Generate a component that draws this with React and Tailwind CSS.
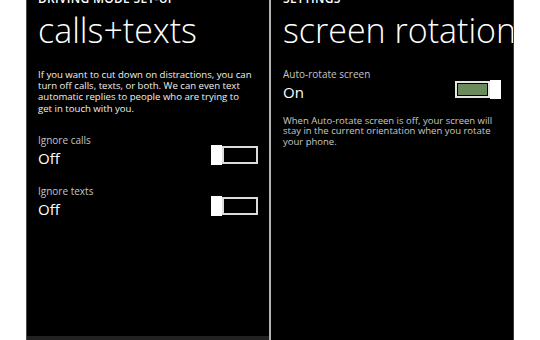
import React from "react";

const font = { fontFamily: '"Open Sans", "Noto Sans", sans-serif' };

function OffToggle() {
  return (
    <div className="flex items-start mt-[11px]">
      <div className="w-[11px] h-[20px] bg-white" />
      <div className="w-[36px] h-[18px] mt-[1px] border-2 border-[#dcdcdc] bg-black" />
    </div>
  );
}

function OnToggle() {
  return (
    <div className="flex items-start mt-[12px]">
      <div className="w-[35px] h-[17px] mt-[1px] border-2 border-[#e6e6e6] bg-black p-[1px]">
        <div className="w-full h-full bg-[#6b8b5c]" />
      </div>
      <div className="w-[11px] h-[19px] bg-white" />
    </div>
  );
}

export default function App() {
  return (
    <div className="w-[540px] h-[340px] bg-white flex pl-[26px] overflow-hidden" style={font}>
      {/* Left screen */}
      <div className="w-[243px] h-full bg-black border-l border-[#4a4a4a] flex flex-col overflow-hidden">
        <div className="flex-1 flex flex-col pl-[11px] pr-[11px]">
          <div className="-mt-[7px] text-[12px] leading-[12px] font-semibold text-white tracking-wide whitespace-nowrap">
            DRIVING MODE SET-UP
          </div>
          <div className="mt-[8px] text-[34px] leading-[34px] font-light text-white whitespace-nowrap">
            calls+texts
          </div>
          <p className="mt-[22px] mr-[4px] text-[9.6px] leading-[11.2px] text-[#f0f0f0]">
            If you want to cut down on distractions, you can turn off calls, texts, or both. We can even text automatic replies to people who are trying to get in touch with you.
          </p>
          <div className="flex justify-between items-start mt-[20px]">
            <div className="flex flex-col">
              <div className="text-[10px] leading-[12px] text-[#c4c4c4]">Ignore calls</div>
              <div className="mt-[2px] text-[15px] leading-[20px] text-white">Off</div>
            </div>
            <OffToggle />
          </div>
          <div className="flex justify-between items-start mt-[17px]">
            <div className="flex flex-col">
              <div className="text-[10px] leading-[12px] text-[#c4c4c4]">Ignore texts</div>
              <div className="mt-[2px] text-[15px] leading-[20px] text-white">Off</div>
            </div>
            <OffToggle />
          </div>
        </div>
        <div className="h-[4px] bg-[#222222]" />
      </div>
      {/* Divider */}
      <div className="w-[2px] h-full bg-[#b3b3b3]" />
      {/* Right screen */}
      <div className="w-[243px] h-full bg-black border-r border-[#3a3a3a] flex flex-col pl-[12px] pr-[12px] overflow-hidden">
        <div className="-mt-[7px] text-[12px] leading-[12px] font-semibold text-white tracking-wide whitespace-nowrap">
          SETTINGS
        </div>
        <div className="mt-[8px] text-[34px] leading-[34px] font-light text-white whitespace-nowrap">
          screen rotation
        </div>
        <div className="flex justify-between items-start mt-[21px]">
          <div className="flex flex-col">
            <div className="text-[10px] leading-[12px] text-[#c4c4c4]">Auto-rotate screen</div>
            <div className="mt-[2px] text-[15px] leading-[20px] text-white">On</div>
          </div>
          <OnToggle />
        </div>
        <p className="mt-[14px] text-[9.5px] leading-[10.3px] text-[#c8c8c8]">
          When Auto-rotate screen is off, your screen will stay in the current orientation when you rotate your phone.
        </p>
      </div>
    </div>
  );
}
